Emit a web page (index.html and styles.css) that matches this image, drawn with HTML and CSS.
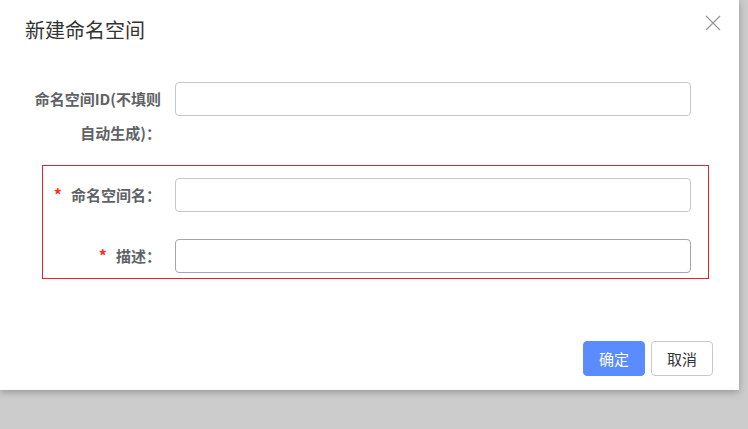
FILE: index.html
```html
<!DOCTYPE html>
<html lang="zh-CN">
<head>
<meta charset="utf-8">
<title>新建命名空间</title>
<link rel="stylesheet" href="styles.css">
</head>
<body>
<div class="dialog">
  <div class="dialog-header">
    <span class="dialog-title">新建命名空间</span>
    <svg class="close" width="16" height="16" viewBox="0 0 16 16"><path d="M1 1L15 15M15 1L1 15" stroke="#9a9a9a" stroke-width="1.3" fill="none"/></svg>
  </div>
  <form class="form">
    <div class="row row-first">
      <label class="label">命名空间ID(不填则<br>自动生成)：</label>
      <input class="input" type="text">
    </div>
    <div class="group">
      <div class="row">
        <label class="label"><span class="req">*</span>命名空间名：</label>
        <input class="input" type="text">
      </div>
      <div class="row row-gap">
        <label class="label"><span class="req">*</span>描述：</label>
        <input class="input input-hover" type="text">
      </div>
    </div>
  </form>
  <div class="dialog-footer">
    <button class="btn btn-primary" type="button">确定</button>
    <button class="btn" type="button">取消</button>
  </div>
</div>
</body>
</html>
```
FILE: styles.css
```css
html, body {
  margin: 0;
  padding: 0;
}
body {
  background: #cccccc;
  width: 748px;
  height: 429px;
  overflow: hidden;
  font-family: "Noto Sans CJK SC", "Noto Sans", sans-serif;
}
.dialog {
  width: 739px;
  height: 390px;
  background: #ffffff;
  box-shadow: 0 2px 7px rgba(0, 0, 0, 0.28);
  display: flex;
  flex-direction: column;
  box-sizing: border-box;
}
.dialog-header {
  display: flex;
  justify-content: space-between;
  align-items: flex-start;
  padding: 18px 18px 0 25px;
}
.dialog-title {
  font-size: 20px;
  line-height: 24px;
  color: #333333;
}
.close {
  margin-top: -3px;
  display: block;
}
.form {
  margin: 0;
  padding: 40px 48px 0 20px;
}
.row {
  display: flex;
  align-items: flex-start;
}
.label {
  flex: none;
  box-sizing: border-box;
  width: 132px;
  height: 34px;
  padding-right: 14px;
  text-align: right;
  font-size: 15px;
  font-weight: bold;
  line-height: 34px;
  color: #606266;
  white-space: nowrap;
}
.row-first .label {
  width: 155px;
  height: auto;
}
.req {
  color: #ff2d1a;
  font-size: 16px;
  line-height: 1;
  margin-right: 9px;
}
.input {
  flex: 1;
  height: 34px;
  box-sizing: border-box;
  border: 1px solid #c6c8d0;
  border-radius: 4px;
  background: #ffffff;
  padding: 0 10px;
  font-size: 14px;
  margin: 0;
  outline: none;
}
.input-hover {
  border-color: #a4a5ad;
}
.group {
  margin: 15px -18px 0 22px;
  border: 1px solid #e8202e;
  padding: 12px 17px 5px 0;
}
.row-gap {
  margin-top: 27px;
}
.dialog-footer {
  margin-top: auto;
  display: flex;
  justify-content: flex-end;
  gap: 6px;
  padding: 0 26px 14px 0;
}
.btn {
  width: 62px;
  height: 35px;
  box-sizing: border-box;
  border: 1px solid #c8c9ce;
  border-radius: 4px;
  background: #ffffff;
  color: #333333;
  font-family: "Noto Sans CJK SC", sans-serif;
  font-size: 15px;
  padding: 0;
}
.btn-primary {
  background: #5a8bff;
  border-color: #5a8bff;
  color: #ffffff;
}
```
